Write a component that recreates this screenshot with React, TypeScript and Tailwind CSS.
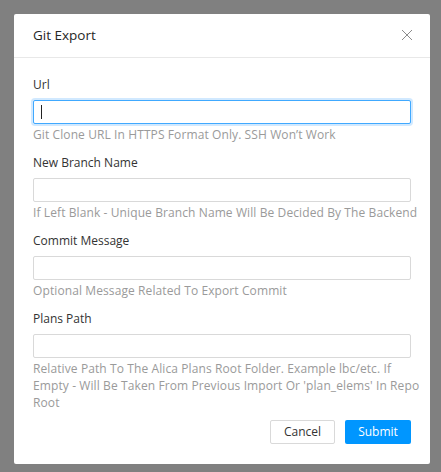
import React from "react";

const font = { fontFamily: '"Open Sans", "Noto Sans", sans-serif' };

function Field({
  label,
  help,
  focused,
  last,
}: {
  label: string;
  help: React.ReactNode;
  focused?: boolean;
  last?: boolean;
}) {
  return (
    <div className={last ? "" : "mb-[11px]"}>
      <div className="text-[12px] leading-[18px] text-[#333333] mb-[6px]">{label}</div>
      {focused ? (
        <div className="h-[24px] w-full rounded-[2px] border border-[#40a9ff] shadow-[0_0_0_2px_rgba(24,144,255,0.2)] bg-white flex items-center pl-[7px]">
          <div className="w-px h-[14px] bg-[#222]" />
        </div>
      ) : (
        <div className="h-[24px] w-full rounded-[2px] border border-[#d9d9d9] bg-white" />
      )}
      <div className="mt-[2px] text-[12px] leading-[17px] text-[#9a9a9a] tracking-[0.1px] whitespace-nowrap">
        {help}
      </div>
    </div>
  );
}

export default function App() {
  return (
    <div className="w-[441px] h-[472px] bg-[#808080] pt-[14px] pl-[14px]" style={font}>
      <div className="w-[416px] h-[450px] bg-white rounded-[2px] flex flex-col">
        <div className="h-[44px] border-b border-[#e8e8e8] px-[19px] flex items-center justify-between">
          <div className="text-[13.5px] font-medium text-[#262626]">Git Export</div>
          <svg width="12" height="12" viewBox="0 0 12 12" className="mr-[-2px] mt-[-1px]">
            <path d="M1 1 L11 11 M11 1 L1 11" stroke="#8c8c8c" strokeWidth="1" fill="none" />
          </svg>
        </div>
        <div className="px-[19px] pt-[18px]">
          <Field label="Url" help="Git Clone URL In HTTPS Format Only. SSH Won’t Work" focused />
          <Field
            label="New Branch Name"
            help="If Left Blank - Unique Branch Name Will Be Decided By The Backend"
          />
          <Field label="Commit Message" help="Optional Message Related To Export Commit" />
          <Field
            label="Plans Path"
            help={
              <>
                Relative Path To The Alica Plans Root Folder. Example lbc/etc. If
                <br />
                Empty - Will Be Taken From Previous Import Or 'plan_elems' In Repo
                <br />
                Root
              </>
            }
            last
          />
          <div className="flex justify-end gap-[10px] mt-[9px]">
            <button className="h-[24px] w-[65px] rounded-[2px] border border-[#d9d9d9] bg-white text-[12px] text-[#333]">
              Cancel
            </button>
            <button className="h-[24px] w-[66px] rounded-[2px] bg-[#0096ff] text-[12px] text-white">
              Submit
            </button>
          </div>
        </div>
      </div>
    </div>
  );
}
